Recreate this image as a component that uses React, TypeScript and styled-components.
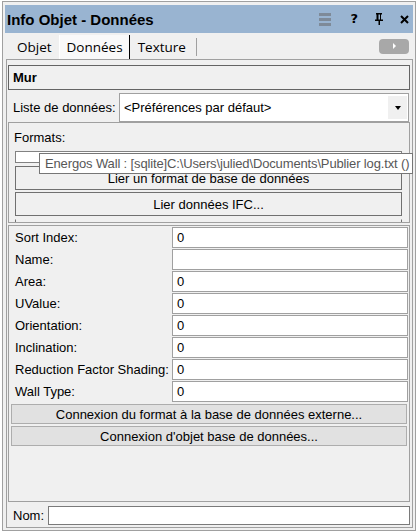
import React from "react";
import styled, { createGlobalStyle } from "styled-components";

const Global = createGlobalStyle`
  html, body { margin: 0; padding: 0; background: #ffffff; }
  body { font-family: "Liberation Sans", Arial, sans-serif; font-size: 13px; color: #000; }
  * { box-sizing: border-box; }
`;

const Window = styled.div`
  margin: 1px 0 0 2px;
  width: 414px;
  height: 530px;
  border: 1px solid #a0a0a0;
  background: #f0f0f0;
  display: flex;
  flex-direction: column;
`;

const TitleBar = styled.div`
  margin: 3px 2px 0 2px;
  height: 28px;
  background: #99b4d1;
  display: flex;
  align-items: center;
  padding: 0 4px 0 2px;
`;

const TitleText = styled.div`
  font-family: "Liberation Sans", Arial, sans-serif;
  font-weight: bold;
  font-size: 15px;
  color: #000;
  flex: 1;
`;

const TitleIcon = styled.div<{ $gap: number }>`
  margin-left: ${(p) => p.$gap}px;
  display: flex;
  align-items: center;
  justify-content: center;
  color: #000;
`;

const HelpGlyph = styled.span`
  font-family: "DejaVu Sans", sans-serif;
  font-weight: bold;
  font-size: 13px;
  line-height: 14px;
`;

const TabRow = styled.div`
  height: 26px;
  margin: 0 2px 0 2px;
  padding-left: 4px;
  display: flex;
  align-items: flex-end;
`;

const Tab = styled.div<{ $active?: boolean }>`
  height: 24px;
  padding: 0 6px 0 7px;
  display: flex;
  align-items: center;
  font-family: "Open Sans", sans-serif;
  font-size: 13.5px;
  color: #000;
  background: ${(p) => (p.$active ? "#f9f9f9" : "transparent")};
  border-left: 1px solid ${(p) => (p.$active ? "#ffffff" : "transparent")};
  border-right: 1px solid ${(p) => (p.$active ? "#000000" : "transparent")};
`;

const TabSeparator = styled.div`
  width: 1px;
  height: 18px;
  background: #a0a0a0;
  align-self: center;
  margin: 2px 0 0 3px;
`;

const ScrollButton = styled.div`
  margin-left: auto;
  margin-right: 4px;
  align-self: center;
  width: 30px;
  height: 15px;
  border-radius: 4px;
  background: #a8a8a8;
  display: flex;
  align-items: center;
  justify-content: center;
  &::after {
    content: "";
    border-left: 3px solid #ffffff;
    border-top: 3px solid transparent;
    border-bottom: 3px solid transparent;
  }
`;

const Panel = styled.div`
  position: relative;
  flex: 1;
  margin: 0 2px 2px 3px;
  border: 1px solid #a0a0a0;
  padding: 0 2px 0 1px;
  display: flex;
  flex-direction: column;
`;

const ObjectBox = styled.div`
  margin-top: 5px;
  height: 25px;
  border: 1px solid #646464;
  padding-left: 4px;
  display: flex;
  align-items: center;
  font-weight: bold;
  font-size: 13px;
`;

const ListRow = styled.div`
  margin-top: 3px;
  height: 29px;
  display: flex;
  align-items: stretch;
`;

const RowLabel = styled.div<{ $width?: number; $pad?: number }>`
  width: ${(p) => (p.$width ? `${p.$width}px` : "auto")};
  padding-left: ${(p) => p.$pad ?? 5}px;
  display: flex;
  align-items: center;
  white-space: nowrap;
  font-size: 13px;
  color: #000;
`;

const Select = styled.div`
  width: 290px;
  margin-left: auto;
  margin-right: 1px;
  background: #ffffff;
  border: 1px solid #a0a0a0;
  display: flex;
  align-items: center;
  padding: 2px 1px 2px 4px;
  font-size: 13px;
`;

const SelectText = styled.div`
  flex: 1;
`;

const SelectArrow = styled.div`
  width: 19px;
  align-self: stretch;
  background: #f0f0f0;
  display: flex;
  align-items: center;
  justify-content: center;
  &::after {
    content: "";
    border-top: 4px solid #000;
    border-left: 3.5px solid transparent;
    border-right: 3.5px solid transparent;
  }
`;

const Group = styled.div`
  height: 101px;
  border: 1px solid #a0a0a0;
  overflow: hidden;
  padding: 7px 0 0 0;
  display: flex;
  flex-direction: column;
`;

const GroupLabel = styled.div`
  padding-left: 5px;
  line-height: 15px;
  height: 15px;
  font-size: 13px;
`;

const ListBox = styled.div`
  margin: 6px 0 0 6px;
  width: 387px;
  height: 12px;
  flex-shrink: 0;
  background: #ffffff;
  border: 1px solid #828282;
`;

const FormatButton = styled.div<{ $top: number; $stub?: boolean }>`
  margin: ${(p) => p.$top}px 0 0 6px;
  width: 387px;
  height: 24px;
  flex-shrink: 0;
  border: 1px solid #707070;
  border-top-color: ${(p) => (p.$stub ? "#f0f0f0" : "#707070")};
  background: #f0f0f0;
  display: flex;
  align-items: center;
  justify-content: center;
  font-size: 13px;
`;

const Tooltip = styled.div`
  position: absolute;
  left: 32px;
  top: 93px;
  width: 374px;
  height: 21px;
  background: #ffffff;
  border: 1px solid #767676;
  padding-left: 5px;
  display: flex;
  align-items: center;
  font-size: 13px;
  letter-spacing: -0.14px;
  color: #575757;
  white-space: nowrap;
  overflow: hidden;
`;

const PropPanel = styled.div`
  margin-top: 2px;
  flex: 1;
  border: 1px solid #a0a0a0;
  padding-top: 1px;
  display: flex;
  flex-direction: column;
`;

const PropRow = styled.div`
  height: 22px;
  display: grid;
  grid-template-columns: 163px 236px;
  align-items: start;
`;

const PropLabel = styled.div`
  padding-left: 6px;
  height: 21px;
  line-height: 21px;
  font-size: 13px;
  white-space: nowrap;
`;

const Field = styled.div<{ $width?: number; $height: number; $border?: string; $push?: boolean }>`
  width: ${(p) => (p.$width ? `${p.$width}px` : "auto")};
  height: ${(p) => p.$height}px;
  margin-left: ${(p) => (p.$push ? "auto" : "0")};
  background: #ffffff;
  border: 1px solid ${(p) => p.$border ?? "#a0a0a0"};
  padding-left: 4px;
  display: flex;
  align-items: center;
  font-size: 13px;
`;

const PropButton = styled.div<{ $top: number }>`
  margin: ${(p) => p.$top}px 2px 0 2px;
  height: 20px;
  background: #e1e1e1;
  border: 1px solid #adadad;
  display: flex;
  align-items: center;
  justify-content: center;
  font-size: 13px;
`;

const NameRow = styled.div`
  height: 25px;
  padding: 4px 0 2px 0;
  display: flex;
  align-items: stretch;
`;

const MenuIcon = () => (
  <svg width="12" height="14" viewBox="0 0 12 14">
    <rect x="0" y="1" width="12" height="3" fill="#7e8a98" />
    <rect x="0" y="6" width="12" height="3" fill="#7e8a98" />
    <rect x="0" y="11" width="12" height="3" fill="#7e8a98" />
  </svg>
);

const PinIcon = () => (
  <svg width="8" height="12" viewBox="0 0 8 12">
    <rect x="1" y="0" width="6" height="1.5" fill="#000" />
    <rect x="1.5" y="0" width="2" height="7" fill="#000" />
    <rect x="5" y="0" width="1" height="7" fill="#000" />
    <rect x="0" y="6.5" width="8" height="1.5" fill="#000" />
    <rect x="3.5" y="8" width="1.5" height="4" fill="#000" />
  </svg>
);

const CloseIcon = () => (
  <svg width="9" height="9" viewBox="0 0 9 9">
    <path d="M1 1 L8 8 M8 1 L1 8" stroke="#000" strokeWidth="2" />
  </svg>
);

const props: [string, string][] = [
  ["Sort Index:", "0"],
  ["Name:", ""],
  ["Area:", "0"],
  ["UValue:", "0"],
  ["Orientation:", "0"],
  ["Inclination:", "0"],
  ["Reduction Factor Shading:", "0"],
  ["Wall Type:", "0"],
];

export default function App() {
  return (
    <>
      <Global />
      <Window>
        <TitleBar>
          <TitleText>Info Objet - Données</TitleText>
          <TitleIcon $gap={0}>
            <MenuIcon />
          </TitleIcon>
          <TitleIcon $gap={19}>
            <HelpGlyph>?</HelpGlyph>
          </TitleIcon>
          <TitleIcon $gap={17}>
            <PinIcon />
          </TitleIcon>
          <TitleIcon $gap={17}>
            <CloseIcon />
          </TitleIcon>
        </TitleBar>
        <TabRow>
          <Tab>Objet</Tab>
          <Tab $active>Données</Tab>
          <Tab>Texture</Tab>
          <TabSeparator />
          <ScrollButton />
        </TabRow>
        <Panel>
          <ObjectBox>Mur</ObjectBox>
          <ListRow>
            <RowLabel $width={111}>Liste de données:</RowLabel>
            <Select>
              <SelectText>&lt;Préférences par défaut&gt;</SelectText>
              <SelectArrow />
            </Select>
          </ListRow>
          <Group>
            <GroupLabel>Formats:</GroupLabel>
            <ListBox />
            <FormatButton $top={3}>Lier un format de base de données</FormatButton>
            <FormatButton $top={2}>Lier données IFC...</FormatButton>
            <FormatButton $top={3} $stub />
          </Group>
          <PropPanel>
            {props.map(([label, value]) => (
              <PropRow key={label}>
                <PropLabel>{label}</PropLabel>
                <Field $width={236} $height={21}>
                  {value}
                </Field>
              </PropRow>
            ))}
            <PropButton $top={1}>Connexion du format à la base de données externe...</PropButton>
            <PropButton $top={2}>Connexion d'objet base de données...</PropButton>
          </PropPanel>
          <NameRow>
            <RowLabel $pad={5}>Nom:</RowLabel>
            <Field $width={362} $height={19} $border="#7a7a7a" $push />
          </NameRow>
          <Tooltip>Energos Wall : [sqlite]C:\Users\julied\Documents\Publier log.txt ()</Tooltip>
        </Panel>
      </Window>
    </>
  );
}
